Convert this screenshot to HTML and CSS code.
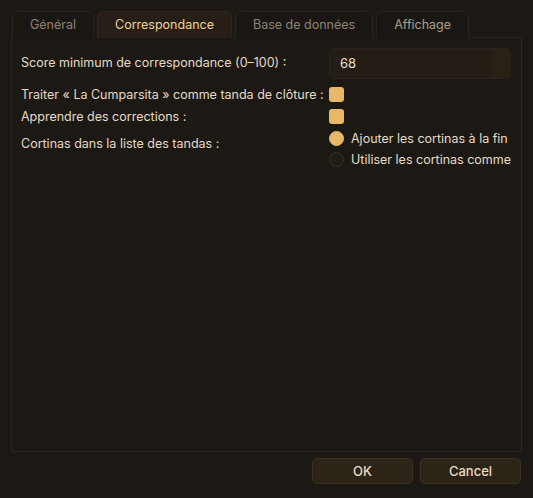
FILE: index.html
```html
<!DOCTYPE html>
<html lang="fr">
<head>
<meta charset="utf-8">
<title>Préférences</title>
<link rel="stylesheet" href="styles.css">
</head>
<body>
<div class="dialog">
  <div class="tabs">
    <div class="tab">Général</div>
    <div class="tab active">Correspondance</div>
    <div class="tab">Base de données</div>
    <div class="tab tab-bright">Affichage</div>
    <div class="tab-fill"></div>
  </div>
  <div class="pane">
    <div class="form">
      <div class="label row-spin">Score minimum de correspondance (0–100) :</div>
      <div class="field row-spin">
        <div class="spin"><span class="spin-value">68</span><span class="spin-btn"></span></div>
      </div>

      <div class="label row-check">Traiter « La Cumparsita » comme tanda de clôture :</div>
      <div class="field row-check"><span class="check"></span></div>

      <div class="label row-check">Apprendre des corrections :</div>
      <div class="field row-check"><span class="check"></span></div>

      <div class="label label-radio">Cortinas dans la liste des tandas :</div>
      <div class="field radios">
        <div class="radio-row"><span class="radio on"></span><span class="radio-text">Ajouter les cortinas à la fin d</span></div>
        <div class="radio-row"><span class="radio"></span><span class="radio-text">Utiliser les cortinas comme</span></div>
      </div>
    </div>
  </div>
  <div class="buttons">
    <button class="btn">OK</button>
    <button class="btn">Cancel</button>
  </div>
</div>
</body>
</html>
```
FILE: styles.css
```css
html, body {
  margin: 0;
  padding: 0;
  background: #1c1915;
}
body {
  width: 533px;
  height: 498px;
  overflow: hidden;
  font-family: Inter, "Noto Sans", "Liberation Sans", sans-serif;
  font-size: 12.5px;
  color: #e6dac6;
}
.dialog {
  padding: 11px 11px 0 11px;
}
.tabs {
  display: flex;
  align-items: flex-end;
  height: 27px;
  padding-left: 1px;
  gap: 3px;
}
.tab {
  height: 26px;
  line-height: 26px;
  padding: 0 17px;
  background: #191613;
  border: 1px solid #27231d;
  border-bottom: none;
  border-radius: 6px 6px 0 0;
  color: #8d8373;
  white-space: nowrap;
}
.tab.active {
  background: #271f17;
  border-color: #2e261c;
  color: #f1d294;
}
.tab.tab-bright {
  color: #ab9f8b;
}
.tab-fill {
  flex: 1;
  height: 0;
  border-bottom: 1px solid #2b2620;
  margin-right: 1px;
}
.pane {
  height: 414px;
  border: 1px solid #2b2620;
  border-top: none;
  box-sizing: border-box;
  width: 511px;
  padding: 10px 10px 0 9px;
}
.form {
  display: grid;
  grid-template-columns: 308px 182px;
  row-gap: 7px;
}
.label {
  display: flex;
  align-items: center;
  white-space: nowrap;
}
.field {
  display: flex;
  align-items: center;
  overflow: hidden;
}
.row-spin {
  height: 31px;
  margin-bottom: 1px;
}
.label.row-spin {
  align-items: flex-start;
  padding-top: 7px;
  box-sizing: border-box;
}
.row-check {
  height: 15px;
}
.spin {
  display: flex;
  width: 182px;
  height: 31px;
  box-sizing: border-box;
  background: #241d16;
  border: 1px solid #2b241b;
  border-radius: 5px;
  overflow: hidden;
}
.spin-value {
  flex: 1;
  padding-left: 10px;
  line-height: 29px;
  font-size: 13px;
  color: #ecdfc9;
}
.spin-btn {
  width: 18px;
  background: #2a2116;
}
.check {
  width: 15px;
  height: 15px;
  border-radius: 3px;
  background: #e9b866;
}
.label-radio {
  align-items: flex-start;
  padding-top: 5px;
  line-height: 16px;
}
.radios {
  flex-direction: column;
  align-items: stretch;
  gap: 6px;
}
.radio-row {
  display: flex;
  align-items: center;
  height: 15px;
  gap: 7px;
  white-space: nowrap;
}
.radio {
  flex: none;
  width: 15px;
  height: 15px;
  border-radius: 50%;
  box-sizing: border-box;
  background: #221b15;
  border: 1px solid #3a3125;
}
.radio.on {
  background: #e9b866;
  border-color: #e9b866;
}
.radio-text {
  color: #e6dac6;
}
.buttons {
  display: flex;
  justify-content: flex-end;
  gap: 7px;
  padding-top: 6px;
  padding-right: 1px;
}
.btn {
  width: 101px;
  height: 26px;
  background: #2d2418;
  border: 1px solid #3b3021;
  border-radius: 5px;
  color: #eadcc2;
  font-family: Inter, "Noto Sans", "Liberation Sans", sans-serif;
  font-size: 13px;
  font-weight: 500;
  padding: 0;
}
```
